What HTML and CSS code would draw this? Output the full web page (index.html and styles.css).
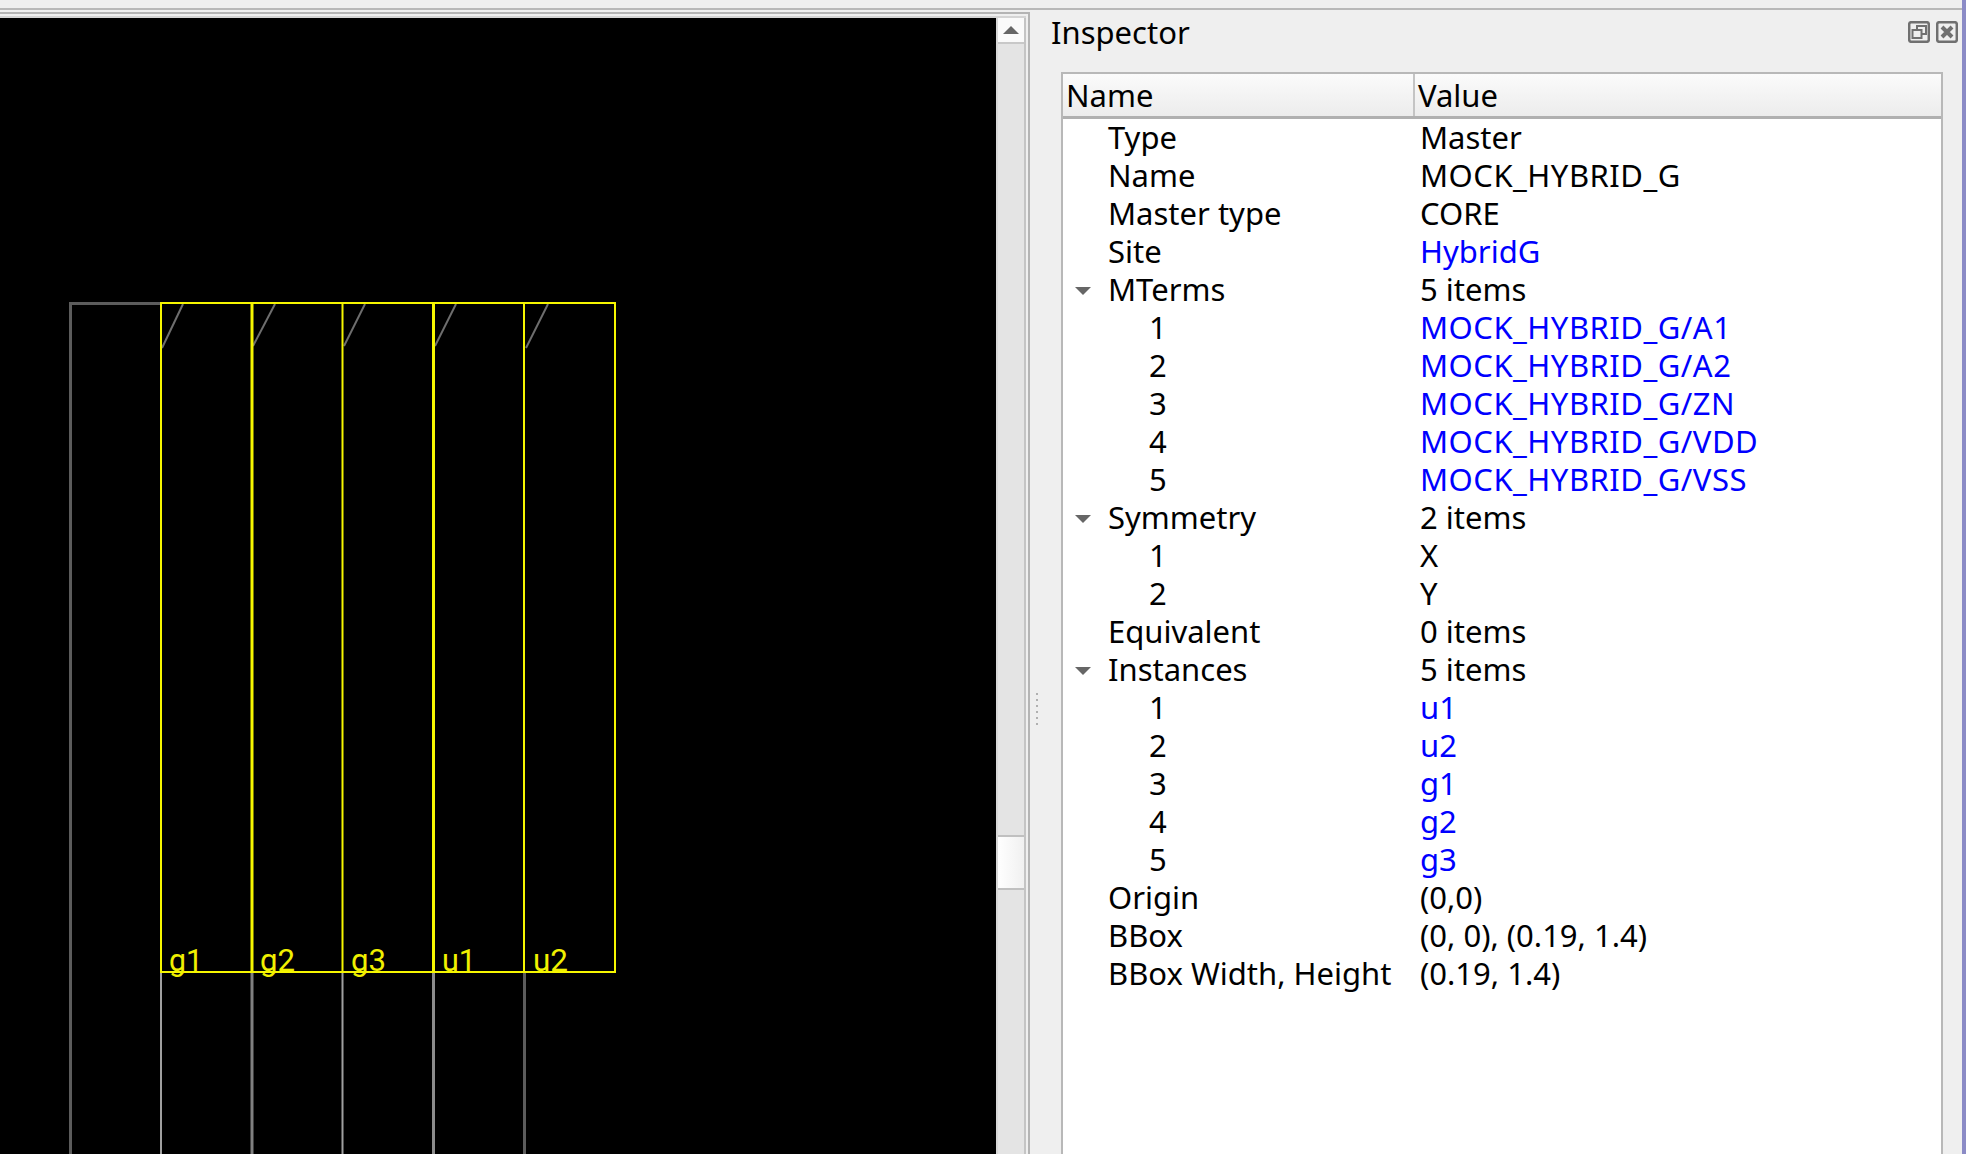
FILE: index.html
```html
<!DOCTYPE html>
<html lang="en">
<head>
  <meta charset="UTF-8">
  <title>Inspector</title>
  <link rel="stylesheet" href="styles.css">
</head>
<body>

  <div class="top-strip"></div>

  <div class="main">

    <!-- Layout view -->
    <div class="view-frame">
      <div class="view-inner">
        <svg class="layout-view" width="996" height="1136" viewBox="0 18 996 1136">
          <path d="M70.5 1154V303.5H161" fill="none" stroke="#5c5c5c" stroke-width="3"/>
          <g fill="none" stroke-width="2">
            <path d="M161 972V1154" stroke="#a0a0a0"/>
            <path d="M252 972V1154" stroke="#808080" stroke-width="3"/>
            <path d="M342.5 972V1154" stroke="#a0a0a0"/>
            <path d="M433.5 972V1154" stroke="#8c8c8c" stroke-width="3"/>
            <path d="M524.5 972V1154" stroke="#5c5c5c" stroke-width="3"/>
          </g>
          <g fill="none" stroke="#6e6e6e" stroke-width="2">
            <path d="M183 304L162 348"/>
            <path d="M275 304L253 346"/>
            <path d="M365 304L344 346"/>
            <path d="M456 304L435 346"/>
            <path d="M548 304L526 348"/>
          </g>
          <g fill="none" stroke="#f6f600" stroke-width="2">
            <path d="M161 303H615V972H161Z"/>
            <path d="M252 303V972" stroke-width="3"/>
            <path d="M342.5 303V972"/>
            <path d="M433.5 303V972" stroke-width="3"/>
            <path d="M524 303V972"/>
          </g>
          <g class="inst-labels">
            <text x="169" y="971" textLength="34" lengthAdjust="spacingAndGlyphs">g1</text>
            <text x="260" y="971" textLength="35" lengthAdjust="spacingAndGlyphs">g2</text>
            <text x="351" y="971" textLength="35" lengthAdjust="spacingAndGlyphs">g3</text>
            <text x="442" y="971" textLength="34" lengthAdjust="spacingAndGlyphs">u1</text>
            <text x="533" y="971" textLength="35" lengthAdjust="spacingAndGlyphs">u2</text>
          </g>
        </svg>

        <div class="scrollbar">
          <div class="scroll-btn"><span class="arrow-up"></span></div>
          <div class="scroll-track"></div>
          <div class="scroll-handle"></div>
          <div class="scroll-rest"></div>
        </div>
      </div>
    </div>

    <div class="splitter">
      <div class="grip">
        <i></i><i></i><i></i><i></i><i></i><i></i>
      </div>
    </div>

    <!-- Inspector dock -->
    <div class="dock">
      <div class="dock-title">
        <span class="dock-name">Inspector</span>
        <div class="dock-buttons">
          <svg width="22" height="22" viewBox="0 0 22 22" fill="none" stroke="#707070" stroke-width="2.5">
            <rect x="1.2" y="1.2" width="19.6" height="19.6" rx="2"/>
            <rect x="9" y="5" width="9" height="8" stroke-width="2"/>
            <rect x="4.5" y="9" width="9" height="8" fill="#efefef" stroke-width="2"/>
          </svg>
          <svg width="22" height="22" viewBox="0 0 22 22" fill="none" stroke="#707070" stroke-width="2.5">
            <rect x="1.2" y="1.2" width="19.6" height="19.6" rx="2"/>
            <path d="M6 6L16 16M16 6L6 16" stroke-width="4"/>
          </svg>
        </div>
      </div>

      <div class="tree">
        <div class="tree-header">
          <div class="head-name">Name</div>
          <div class="head-value">Value</div>
        </div>

        <div class="row"><div class="name">Type</div><div class="value">Master</div></div>
        <div class="row"><div class="name">Name</div><div class="value caps">MOCK_HYBRID_G</div></div>
        <div class="row"><div class="name">Master type</div><div class="value">CORE</div></div>
        <div class="row"><div class="name">Site</div><div class="value link">HybridG</div></div>

        <div class="row"><div class="name"><span class="expander"></span>MTerms</div><div class="value">5 items</div></div>
        <div class="row"><div class="name child">1</div><div class="value link caps">MOCK_HYBRID_G/A1</div></div>
        <div class="row"><div class="name child">2</div><div class="value link caps">MOCK_HYBRID_G/A2</div></div>
        <div class="row"><div class="name child">3</div><div class="value link caps">MOCK_HYBRID_G/ZN</div></div>
        <div class="row"><div class="name child">4</div><div class="value link caps">MOCK_HYBRID_G/VDD</div></div>
        <div class="row"><div class="name child">5</div><div class="value link caps">MOCK_HYBRID_G/VSS</div></div>

        <div class="row"><div class="name"><span class="expander"></span>Symmetry</div><div class="value">2 items</div></div>
        <div class="row"><div class="name child">1</div><div class="value">X</div></div>
        <div class="row"><div class="name child">2</div><div class="value">Y</div></div>

        <div class="row"><div class="name">Equivalent</div><div class="value">0 items</div></div>

        <div class="row"><div class="name"><span class="expander"></span>Instances</div><div class="value">5 items</div></div>
        <div class="row"><div class="name child">1</div><div class="value link">u1</div></div>
        <div class="row"><div class="name child">2</div><div class="value link">u2</div></div>
        <div class="row"><div class="name child">3</div><div class="value link">g1</div></div>
        <div class="row"><div class="name child">4</div><div class="value link">g2</div></div>
        <div class="row"><div class="name child">5</div><div class="value link">g3</div></div>

        <div class="row"><div class="name">Origin</div><div class="value">(0,0)</div></div>
        <div class="row"><div class="name">BBox</div><div class="value">(0, 0), (0.19, 1.4)</div></div>
        <div class="row"><div class="name">BBox Width, Height</div><div class="value">(0.19, 1.4)</div></div>
      </div>
    </div>

  </div>

</body>
</html>
```

FILE: styles.css
```css
html, body {
  margin: 0;
  padding: 0;
  height: 100%;
  overflow: hidden;
}

body {
  display: flex;
  flex-direction: column;
  width: 1966px;
  height: 1154px;
  box-sizing: border-box;
  background-color: #efefef;
  border-right: 4px solid #8b8bc6;
  font-family: "Noto Sans", sans-serif;
  font-size: 31px;
  color: #000;
}

.top-strip {
  height: 8px;
  flex: none;
  border-bottom: 2px solid #b8b8b8;
}

.main {
  flex: 1;
  display: flex;
  min-height: 0;
}

/* left side */
.view-frame {
  flex: none;
  width: 1030px;
  margin-top: 2px;
  padding-top: 2px;
  padding-right: 2px;
  border-top: 2px solid #b4b4b4;
  border-right: 2px solid #b4b4b4;
  box-sizing: border-box;
}

.view-inner {
  display: flex;
  height: 100%;
  box-sizing: border-box;
  border-top: 2px solid #d4d4d4;
}

.layout-view {
  display: block;
  flex: none;
  background-color: #000;
}

.inst-labels text {
  font-family: "Roboto", sans-serif;
  font-size: 32px;
  font-weight: 400;
  fill: #f0f000;
}

.scrollbar {
  display: flex;
  flex-direction: column;
  width: 30px;
  flex: none;
  box-sizing: border-box;
  border-left: 2px solid #d8d8d8;
  border-right: 2px solid #c4c4c4;
  background-color: #e4e4e4;
}

.scroll-btn {
  height: 26px;
  flex: none;
  background-color: #fafafa;
  border-bottom: 2px solid #c8c8c8;
  display: flex;
  justify-content: center;
  padding-top: 8px;
  box-sizing: border-box;
}

.arrow-up {
  width: 0;
  height: 0;
  border-left: 8px solid transparent;
  border-right: 8px solid transparent;
  border-bottom: 8px solid #666;
}

.scroll-track {
  height: 791px;
  flex: none;
}

.scroll-handle {
  height: 55px;
  flex: none;
  box-sizing: border-box;
  border-top: 2px solid #c0c0c0;
  border-bottom: 2px solid #c0c0c0;
  background: linear-gradient(to right, #fff, #f0f0f0);
}

.scroll-rest {
  flex: 1;
}

.splitter {
  flex: none;
  width: 31px;
  box-sizing: border-box;
  display: flex;
  flex-direction: column;
  align-items: flex-start;
  padding-left: 6px;
  padding-top: 683px;
}

.grip {
  display: flex;
  flex-direction: column;
  gap: 4px;
}

.grip i {
  display: block;
  width: 2px;
  height: 2px;
  background-color: #b0b0b0;
}

/* inspector */
.dock {
  flex: 1;
  display: flex;
  flex-direction: column;
  min-width: 0;
}

.dock-title {
  display: flex;
  justify-content: space-between;
  align-items: center;
  height: 44px;
  flex: none;
  margin-left: -10px;
  padding-right: 4px;
}

.dock-buttons {
  display: flex;
  gap: 6px;
}

.dock-buttons svg {
  display: block;
}

.tree {
  flex: 1;
  margin-top: 18px;
  margin-right: 19px;
  border: 2px solid #b8b8b8;
  border-bottom: none;
  background-color: #fff;
}

.tree-header {
  display: flex;
  height: 45px;
  box-sizing: border-box;
  border-bottom: 3px solid #b0b0b0;
  background: linear-gradient(to bottom, #fbfbfb, #ececec);
  line-height: 42px;
}

.head-name {
  width: 352px;
  flex: none;
  padding-left: 3px;
  box-sizing: border-box;
  border-right: 2px solid #c4c4c4;
}

.head-value {
  padding-left: 3px;
}

.row {
  display: flex;
  height: 38px;
  line-height: 37px;
  white-space: nowrap;
}

.name {
  width: 352px;
  flex: none;
  padding-left: 45px;
  box-sizing: border-box;
  position: relative;
}

.child {
  padding-left: 86px;
}

.value {
  padding-left: 5px;
}

.link {
  color: #0000ff;
}

.caps {
  letter-spacing: 0.5px;
}

.expander {
  position: absolute;
  left: 12px;
  top: 16px;
  width: 0;
  height: 0;
  border-left: 8px solid transparent;
  border-right: 8px solid transparent;
  border-top: 8px solid #666;
}
```
